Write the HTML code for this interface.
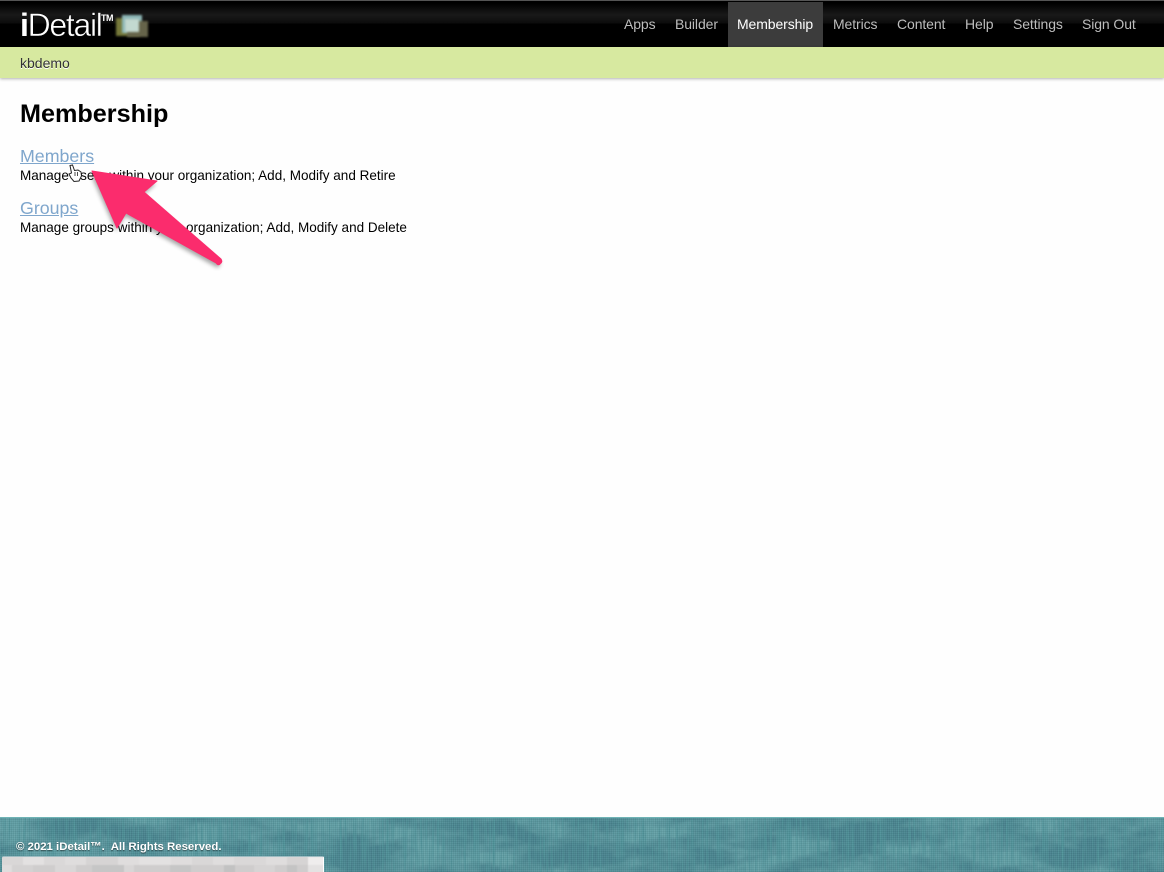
<!DOCTYPE html>
<html>
<head>
<meta charset="utf-8">
<style>
html,body{margin:0;padding:0;width:1164px;height:872px;overflow:hidden;background:#fefefe;font-family:"Liberation Sans",Arial,sans-serif;}
#hdr{position:absolute;left:0;top:0;width:1164px;height:47px;background:linear-gradient(#555 0,#555 1px,#000 1px,#000 2px,#000 3px,#191919 15px,#0c0c0c 23px,#000 24px,#000 47px);}
#logo{position:absolute;left:20px;top:8px;color:#fff;font-size:32px;line-height:34px;letter-spacing:-1.300px;font-weight:400;white-space:nowrap;-webkit-text-stroke:.5px #000;}
#logo b{font-weight:700;-webkit-text-stroke:0;}
#tm{position:absolute;left:101px;top:13px;color:#fff;font-size:9px;font-weight:700;line-height:10px;letter-spacing:-.5px;}
.sq{position:absolute;filter:blur(1px);}
.nav{position:absolute;top:16px;font-size:14px;line-height:17px;color:#bdbdbd;white-space:nowrap;letter-spacing:-.1px;}
#act{position:absolute;left:728px;top:2px;width:95px;height:45px;background:#3c3c3c;}
#sub{position:absolute;left:0;top:47px;width:1164px;height:31px;background:#d7e9a0;box-shadow:0 1px 3px rgba(0,0,0,.3);}
#sub span{position:absolute;left:20px;top:8px;font-size:14px;line-height:16px;color:#333;text-shadow:0 1px 0 #fff;}
h1{position:absolute;left:20px;top:99px;margin:0;font-size:25.200px;line-height:30px;font-weight:700;color:#000;}
a{position:absolute;left:20px;font-size:17.800px;line-height:20px;color:#7fa6cc;text-decoration:underline;}
p{position:absolute;left:20px;margin:0;font-size:13.530px;line-height:16px;color:#000;white-space:nowrap;}
#ftr{position:absolute;left:0;top:817px;width:1164px;height:55px;background:#4a8490;border-top:1px solid #6fb3b5;box-sizing:border-box;overflow:hidden;}
#ftr svg{position:absolute;left:0;top:0;}
#weave{position:absolute;left:0;top:0;width:1164px;height:55px;background:repeating-linear-gradient(90deg,rgba(255,255,255,.025) 0,rgba(255,255,255,.025) 1px,rgba(0,0,0,.04) 1px,rgba(0,0,0,.04) 2px),repeating-linear-gradient(0deg,rgba(255,255,255,.025) 0,rgba(255,255,255,.025) 1px,rgba(0,0,0,.04) 1px,rgba(0,0,0,.04) 2px);}
#copy{position:absolute;left:16px;top:840px;font-size:11.400px;line-height:14px;font-weight:700;color:#fff;text-shadow:0 1px 1px rgba(0,0,0,.5);white-space:nowrap;}
#blur{position:absolute;left:2px;top:856px;width:322px;height:16px;background:#dcdada;border-top:1px solid #9dbcc2;border-right:1px solid #fff;box-sizing:border-box;overflow:hidden;border-radius:2px 2px 0 0;}
#blur svg{position:absolute;left:0;top:0;}
</style>
</head>
<body>
<div id="hdr"></div>
<div id="logo"><b>i</b>Detail</div>
<div id="tm">TM</div>
<div class="sq" style="left:116px;top:18px;width:24px;height:18px;background:#76793a;"></div>
<div class="sq" style="left:122px;top:15px;width:20px;height:18px;background:#8fb8b8;"></div>
<div class="sq" style="left:127px;top:21px;width:21px;height:16px;background:#66644a;"></div>
<div class="sq" style="left:125px;top:19px;width:14px;height:13px;background:#c3d9d0;"></div>
<div id="act"></div>
<div class="nav" style="left:624px;">Apps</div>
<div class="nav" style="left:675px;">Builder</div>
<div class="nav" style="left:737px;color:#fff;">Membership</div>
<div class="nav" style="left:833px;">Metrics</div>
<div class="nav" style="left:897px;">Content</div>
<div class="nav" style="left:965px;">Help</div>
<div class="nav" style="left:1013px;">Settings</div>
<div class="nav" style="left:1082px;">Sign Out</div>
<div id="sub"><span>kbdemo</span></div>
<h1>Membership</h1>
<a href="#" style="top:146px;">Members</a>
<p style="top:168px;">Manage users within your organization; Add, Modify and Retire</p>
<a href="#" style="top:198px;">Groups</a>
<p style="top:220px;">Manage groups within your organization; Add, Modify and Delete</p>
<svg style="position:absolute;left:0;top:0;" width="300" height="300">
<defs><filter id="s" x="-20%" y="-20%" width="140%" height="140%"><feGaussianBlur stdDeviation="2"/></filter></defs>
<path d="M70 165.500 L72.500 165 L74.500 170.500 L78 170 L81 172 L81.500 176 L79 181 L74 181.500 L71 178 L69 174 L71.500 173 Z" fill="#fff" stroke="#222" stroke-width="1"/>
<path d="M75 172 V176 M77.500 172 V176" stroke="#222" stroke-width=".8"/>
<path d="M92 172 L157 181 L144 192 L222 260 L219 265 L126 213 L117 228 Z" fill="#000" opacity=".35" filter="url(#s)" transform="translate(-1,3)"/>
<path d="M92 171 L157 181 L144 192 L221 259 Q223 262 220 264 Q218 266 216 263 L126 213 L117 228 Z" fill="#fb2c6d" stroke="#fb2c6d" stroke-width="1" stroke-linejoin="round"/>
</svg>
<div id="ftr">
<svg width="1164" height="55">
<filter id="t" x="0" y="0" width="100%" height="100%"><feTurbulence type="fractalNoise" baseFrequency=".018 .04" numOctaves="5" seed="11"/><feColorMatrix values="0 0 0 0 .13 0 0 0 0 .36 0 0 0 0 .39 3.200 0 0 0 -1.150"/></filter>
<filter id="v" x="0" y="0" width="100%" height="100%"><feTurbulence type="fractalNoise" baseFrequency=".45 .02" numOctaves="2" seed="3"/><feColorMatrix values="0 0 0 0 .08 0 0 0 0 .3 0 0 0 0 .33 2.400 0 0 0 -.95"/></filter>
<rect width="1164" height="55" filter="url(#t)"/>
<rect width="1164" height="55" filter="url(#v)"/>
</svg>
<div id="weave"></div>
</div>
<div id="copy">© 2021 iDetail™.&nbsp; All Rights Reserved.</div>
<div id="blur">
<svg width="322" height="16" shape-rendering="crispEdges" style="filter:blur(.5px)">
<rect x="0" y="0" width="322" height="8" fill="#dfdddd"/>
<rect x="0" y="8" width="322" height="8" fill="#cfcdcd"/>
<rect x="0" width="21" height="8" fill="#d9d7d7"/><rect x="21" width="21" height="8" fill="#e3e1e1"/><rect x="42" width="21" height="8" fill="#dad8d8"/><rect x="84" width="32" height="8" fill="#d6d4d4"/><rect x="137" width="32" height="8" fill="#e3e1e1"/><rect x="190" width="21" height="8" fill="#d9d7d7"/><rect x="232" width="32" height="8" fill="#dad8d8"/><rect x="285" width="21" height="8" fill="#d6d4d4"/><rect x="306" width="16" height="8" fill="#efeded"/>
<rect x="0" y="8" width="10" height="8" fill="#dfdddd"/><rect x="10" y="8" width="21" height="8" fill="#d4d2d2"/><rect x="53" y="8" width="21" height="8" fill="#d9d7d7"/><rect x="90" y="8" width="32" height="8" fill="#c6c6c6"/><rect x="122" y="8" width="10" height="8" fill="#d8d6d6"/><rect x="168" y="8" width="21" height="8" fill="#c6c6c6"/><rect x="222" y="8" width="11" height="8" fill="#c2c2c2"/><rect x="252" y="8" width="21" height="8" fill="#d6d4d4"/><rect x="285" y="8" width="10" height="8" fill="#c4c4c4"/><rect x="306" y="8" width="16" height="8" fill="#e4e2e2"/>
</svg>
</div>
</body>
</html>
